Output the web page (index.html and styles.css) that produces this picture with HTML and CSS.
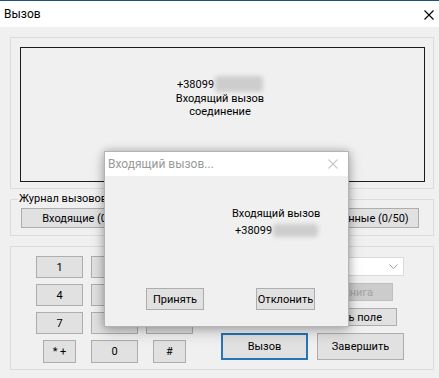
FILE: index.html
```html
<!DOCTYPE html>
<html lang="ru">
<head>
    <meta charset="UTF-8">
    <title>Вызов</title>
    <link rel="stylesheet" href="styles.css">
</head>
<body>
    <div class="window">
        <div class="titlebar">
            <span class="title">Вызов</span>
            <svg class="close" width="10" height="10" viewBox="0 0 10 10">
                <path d="M0.5 0.5 L9.5 9.5 M9.5 0.5 L0.5 9.5" stroke="#000" stroke-width="1.1" fill="none"/>
            </svg>
        </div>

        <div class="client">
            <fieldset class="group group-display">
                <div class="display">
                    <div class="display-text">
                        <div>+38099<span class="blur"></span></div>
                        <div>Входящий вызов</div>
                        <div>соединение</div>
                    </div>
                </div>
            </fieldset>

            <fieldset class="group group-log">
                <legend>Журнал вызовов</legend>
                <div class="log-buttons">
                    <button class="btn">Входящие (0/50)</button>
                    <button class="btn">Исходящие (0/50)</button>
                    <button class="btn">Пропущенные (0/50)</button>
                </div>
            </fieldset>

            <fieldset class="group group-dial">
                <div class="dial-row">
                    <div class="keypad">
                        <button class="btn key">1</button>
                        <button class="btn key">2</button>
                        <button class="btn key">3</button>
                        <button class="btn key">4</button>
                        <button class="btn key">5</button>
                        <button class="btn key">6</button>
                        <button class="btn key">7</button>
                        <button class="btn key">8</button>
                        <button class="btn key">9</button>
                        <button class="btn key key-small">* +</button>
                        <button class="btn key">0</button>
                        <button class="btn key key-small">#</button>
                    </div>
                    <div class="controls">
                        <div class="combo">
                            <span class="combo-text"></span>
                            <span class="combo-arrow">
                                <svg width="9" height="6" viewBox="0 0 9 6">
                                    <path d="M0.5 0.5 L4.5 4.5 L8.5 0.5" stroke="#a0a0a0" stroke-width="1" fill="none"/>
                                </svg>
                            </span>
                        </div>
                        <button class="btn btn-disabled">Телефонная книга</button>
                        <button class="btn btn-clear">Очистить поле</button>
                        <div class="call-row">
                            <button class="btn btn-call">Вызов</button>
                            <button class="btn btn-end">Завершить</button>
                        </div>
                    </div>
                </div>
            </fieldset>
        </div>

        <!-- окно входящего вызова поверх главного -->
        <div class="dialog">
            <div class="dialog-title">
                <span>Входящий вызов...</span>
                <svg class="dialog-close" width="10" height="10" viewBox="0 0 10 10">
                    <path d="M0.5 0.5 L9.5 9.5 M9.5 0.5 L0.5 9.5" stroke="#c8c8c8" stroke-width="1.1" fill="none"/>
                </svg>
            </div>
            <div class="dialog-body">
                <div class="caller">
                    <div>Входящий вызов</div>
                    <div class="caller-number">+38099<span class="blur blur-small"></span></div>
                </div>
                <div class="dialog-buttons">
                    <button class="btn btn-accept">Принять</button>
                    <button class="btn btn-reject">Отклонить</button>
                </div>
            </div>
        </div>
    </div>
</body>
</html>
```

FILE: styles.css
```css
body {
    margin: 0;
    padding: 0;
    font-family: Roboto, 'Noto Sans', sans-serif;
    font-size: 11px;
    color: #000;
    background-color: #f0f0f0;
}

.window {
    position: relative;
    width: 439px;
    height: 378px;
    background-color: #f0f0f0;
    overflow: hidden;
}

.titlebar {
    height: 26px;
    border-top: 1px solid #1f4f80;
    background-color: #fff;
    display: flex;
    align-items: center;
    justify-content: space-between;
    padding: 0 5px 0 4px;
}

.title {
    font-size: 12px;
    line-height: 16px;
}

.close {
    display: block;
    margin-top: 1px;
}

.client {
    padding: 10px 5px 0 10px;
}

.group {
    margin: 0;
    padding: 0;
    border: 1px solid #dcdcdc;
    min-width: 0;
    box-sizing: border-box;
}

.group legend {
    padding: 0 1px;
    margin-left: -3px;
    line-height: 16px;
}

/* экран вызова */
.group-display {
    height: 152px;
    padding: 9px 8px 6px 9px;
}

.display {
    height: 135px;
    border: 1px solid #1c1c1c;
    display: flex;
    justify-content: center;
    padding-top: 28px;
    box-sizing: border-box;
}

.display-text {
    text-align: center;
    line-height: 13px;
    margin-right: 5px;
}

.blur {
    display: inline-block;
    width: 48px;
    height: 16px;
    margin-left: 1px;
    vertical-align: -4px;
    background-color: #cdcdcd;
    border-radius: 4px;
    filter: blur(2px);
}

.blur-small {
    width: 45px;
    height: 13px;
    vertical-align: -3px;
}

/* журнал */
.group-log {
    margin-top: 2px;
    height: 45px;
    padding: 1px 13px 0 10px;
}

.log-buttons {
    display: flex;
    gap: 7px;
}

.btn {
    font-family: Roboto, 'Noto Sans', sans-serif;
    font-size: 11px;
    color: #000;
    background-color: #e1e1e1;
    border: 1px solid #adadad;
    padding: 0;
    margin: 0;
    display: flex;
    align-items: center;
    justify-content: center;
    white-space: nowrap;
    box-sizing: border-box;
}

.log-buttons .btn {
    width: 128px;
    height: 20px;
}

/* набор номера */
.group-dial {
    margin-top: 10px;
    height: 124px;
    padding: 9px 0 0 25px;
}

.dial-row {
    display: flex;
}

.keypad {
    display: grid;
    grid-template-columns: repeat(3, 47px);
    grid-template-rows: repeat(3, 22px) 23px;
    column-gap: 8px;
    row-gap: 6px;
}

.key {
    width: 47px;
    height: 100%;
}

.key-small {
    width: 33px;
    justify-self: center;
}

.controls {
    margin-left: 28px;
    width: 183px;
    display: flex;
    flex-direction: column;
    align-items: flex-end;
}

.combo {
    margin-top: 1px;
    width: 182px;
    height: 19px;
    box-sizing: border-box;
    border: 1px solid #d9d9d9;
    background-color: #fff;
    display: flex;
    justify-content: space-between;
}

.combo-arrow {
    width: 19px;
    display: flex;
    align-items: center;
    justify-content: center;
}

.btn-disabled {
    margin-top: 7px;
    margin-right: 11px;
    padding-right: 8px;
    width: 127px;
    height: 18px;
    background-color: #cccccc;
    border-color: #bfbfbf;
    color: #a3a3a3;
}

.btn-clear {
    margin-top: 7px;
    margin-right: 7px;
    width: 106px;
    height: 18px;
}

.call-row {
    margin-top: 7px;
    width: 183px;
    display: flex;
    justify-content: space-between;
}

.btn-call,
.btn-end {
    width: 87px;
    height: 27px;
}

.btn-call {
    border: 2px solid #2675b8;
}

/* диалог входящего вызова */
.dialog {
    position: absolute;
    left: 104px;
    top: 151px;
    width: 245px;
    height: 176px;
    box-sizing: border-box;
    border: 1px solid #b4b4b4;
    background-color: #f0f0f0;
    box-shadow: 0 0 8px rgba(0, 0, 0, 0.25), 0 5px 14px rgba(0, 0, 0, 0.2);
}

.dialog-title {
    height: 24px;
    background-color: #fff;
    display: flex;
    align-items: center;
    justify-content: space-between;
    padding: 0 10px 0 3px;
    color: #999;
    font-size: 12px;
}

.dialog-body {
    padding: 29px 0 0 127px;
}

.caller {
    line-height: 17px;
}

.caller-number {
    margin-left: 3px;
}

.dialog-buttons {
    display: flex;
    margin: 49px 0 0 -86px;
    gap: 52px;
}

.btn-accept {
    width: 58px;
    height: 22px;
}

.btn-reject {
    width: 59px;
    height: 22px;
}
```
